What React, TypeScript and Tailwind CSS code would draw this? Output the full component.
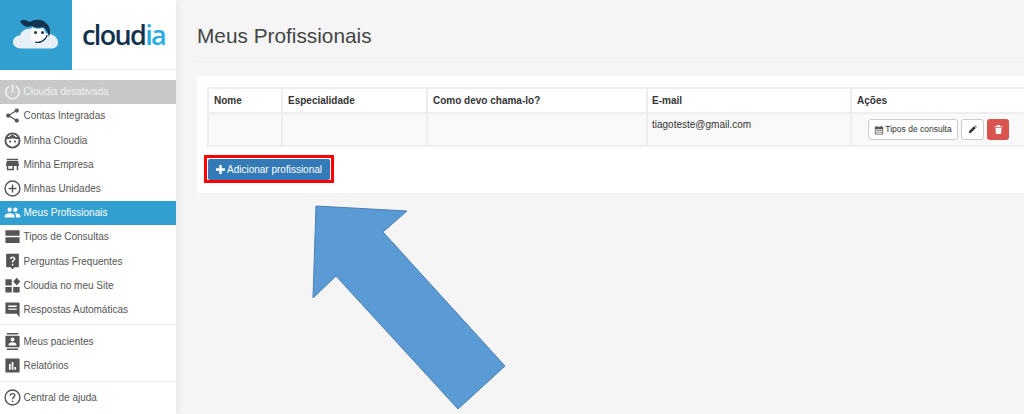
import type { ReactNode } from "react"

const font = "font-['Liberation_Sans',Arial,sans-serif]"

const g = (d: ReactNode) => (
  <svg viewBox="0 0 24 24" className="h-[17px] w-[17px] shrink-0" fill="currentColor">
    {d}
  </svg>
)

const items: { label: string; icon: ReactNode; state?: string; divider?: boolean }[] = [
  {
    label: "Cloudia desativada",
    state: "off",
    icon: (
      <svg viewBox="0 0 24 24" className="h-[17px] w-[17px] shrink-0" fill="none" stroke="currentColor" strokeWidth="2.4" strokeLinecap="round">
        <path d="M12 2.500v10" />
        <path d="M6.500 5a9.500 9.500 0 1 0 11 0" />
      </svg>
    ),
  },
  {
    label: "Contas Integradas",
    icon: g(<path d="M18 16.100c-.8 0-1.400.3-2 .8l-7.100-4.200c.1-.2.1-.5.100-.7s0-.5-.1-.7L16 7.200c.5.500 1.200.8 2 .8 1.700 0 3-1.300 3-3s-1.300-3-3-3-3 1.300-3 3c0 .2 0 .5.100.7L8 9.800C7.500 9.300 6.800 9 6 9c-1.700 0-3 1.300-3 3s1.300 3 3 3c.8 0 1.500-.3 2-.8l7.100 4.200c-.1.2-.1.4-.1.600 0 1.600 1.300 2.900 3 2.900s3-1.300 3-2.900-1.300-2.900-3-2.900z" />),
  },
  {
    label: "Minha Cloudia",
    icon: (
      <svg viewBox="0 0 24 24" className="h-[17px] w-[17px] shrink-0" fill="none" stroke="currentColor" strokeWidth="2.600">
        <circle cx="12" cy="12" r="10" />
        <path d="M3 9c4 0 7-1 9-4 2 3 5 4 9 4" fill="currentColor" />
        <circle cx="8.500" cy="13.500" r="1.500" fill="currentColor" stroke="none" />
        <circle cx="15.500" cy="13.500" r="1.500" fill="currentColor" stroke="none" />
      </svg>
    ),
  },
  {
    label: "Minha Empresa",
    icon: g(<path d="M20 4H4v2h16V4zm1 10v-2l-1-5H4l-1 5v2h1v6h10v-6h4v6h2v-6h1zm-9 4H6v-4h6v4z" />),
  },
  {
    label: "Minhas Unidades",
    icon: (
      <svg viewBox="0 0 24 24" className="h-[17px] w-[17px] shrink-0" fill="none" stroke="currentColor" strokeWidth="2">
        <circle cx="12" cy="12" r="10.500" />
        <path d="M12 6.500v11M6.500 12h11" />
      </svg>
    ),
  },
  {
    label: "Meus Profissionais",
    state: "active",
    icon: g(<path d="M16 11c1.700 0 3-1.300 3-3s-1.300-3-3-3-3 1.300-3 3 1.300 3 3 3zm-8 0c1.700 0 3-1.300 3-3S9.700 5 8 5 5 6.300 5 8s1.300 3 3 3zm0 2c-2.300 0-7 1.200-7 3.500V19h14v-2.500C15 14.200 10.300 13 8 13zm8 0h-1c1.200.8 2 2 2 3.500V19h6v-2.500c0-2.300-4.700-3.500-7-3.500z" />),
  },
  {
    label: "Tipos de Consultas",
    icon: g(<path d="M2 3h20v8H2zM2 13h20v8H2z" />),
  },
  {
    label: "Perguntas Frequentes",
    icon: g(
      <path fillRule="evenodd" d="M4 1h16a1 1 0 0 1 1 1v17a1 1 0 0 1-1 1h-5l-3 3-3-3H4a1 1 0 0 1-1-1V2a1 1 0 0 1 1-1zm7 14v2.500h2.200V15H11zm1.100-10c-2.200 0-3.700 1.300-3.900 3.400h2.200c.1-.9.700-1.500 1.700-1.500s1.600.6 1.600 1.400c0 .7-.4 1.100-1.100 1.700-1 .8-1.600 1.500-1.600 3.400h2.200c0-1.200.3-1.600 1.100-2.300 1-.8 1.700-1.600 1.700-2.900C16 6.400 14.500 5 12.100 5z" />,
    ),
  },
  {
    label: "Cloudia no meu Site",
    icon: g(<path d="M2 3h9v9H2zM2 14h9v8H2zM13 14h9v8h-9zM18 1l5 5.500-5 5.500-5-5.500z" />),
  },
  {
    label: "Respostas Automáticas",
    icon: g(
      <path fillRule="evenodd" d="M3 2h18a1 1 0 0 1 1 1v20l-4-5H3a1 1 0 0 1-1-1V3a1 1 0 0 1 1-1zm3 4.500v2h12v-2H6zm0 4v2h12v-2H6z" />,
    ),
  },
  {
    label: "Meus pacientes",
    divider: true,
    icon: g(
      <path fillRule="evenodd" d="M4 0h16v2H4zM4 22h16v2H4zM3 4h18a1 1 0 0 1 1 1v14a1 1 0 0 1-1 1H3a1 1 0 0 1-1-1V5a1 1 0 0 1 1-1zm9 2.500a2.800 2.800 0 1 0 0 5.600 2.800 2.800 0 0 0 0-5.600zM6.500 17.500h11V16c0-1.800-3.700-2.800-5.500-2.800s-5.500 1-5.500 2.800v1.500z" />,
    ),
  },
  {
    label: "Relatórios",
    icon: g(
      <path fillRule="evenodd" d="M3 2h18a1 1 0 0 1 1 1v18a1 1 0 0 1-1 1H3a1 1 0 0 1-1-1V3a1 1 0 0 1 1-1zm4 8v8h2.500v-8H7zm3.800-3v11h2.500V7h-2.500zm3.800 7v4h2.500v-4h-2.500z" />,
    ),
  },
  {
    label: "Central de ajuda",
    divider: true,
    icon: (
      <svg viewBox="0 0 24 24" className="h-[17px] w-[17px] shrink-0" fill="none" stroke="currentColor" strokeWidth="2">
        <circle cx="12" cy="12" r="10.500" />
        <path d="M8.800 9.500c0-1.900 1.400-3 3.200-3s3.200 1.100 3.200 2.800c0 2.400-3.200 2.500-3.200 5" />
        <circle cx="12" cy="17.300" r="1.200" fill="currentColor" stroke="none" />
      </svg>
    ),
  },
]

function Logo() {
  return (
    <div className="flex h-[70px] items-center border-b border-[#f0f0f0] bg-white">
      <div className="flex h-[70px] w-[72px] shrink-0 items-center justify-center bg-[#31a0d0]">
        <svg viewBox="0 0 46 32" className="ml-[-1px] mt-[-2px] h-8 w-[46px]">
          <path d="M8 30.500c-5 0-8-3-8-6.500s3-6.500 7-6.500c1-4 5-7 10-7 4 0 7 2 9 5 1-.5 3-.5 4 0 6-1 15 2 15 9 0 4-3 6-7 6z" fill="#e6f0f6" />
          <path d="M7 3c3-2 7-1 10 1 5-3 12-3 16 1 4 3 5 9 3 14-1-4-2-8-6-10-4 1-8 1-11-1-4 2-10 0-12-5z" fill="#12324e" />
          <path d="M19 9c3 2 7 2 11 1 2 2 3 5 3 8 0 4-4 7-8 7s-7-3-7-7c0-3 0-6 1-9z" fill="#ffffff" />
          <circle cx="22.500" cy="14.500" r="1.500" fill="#12324e" />
          <circle cx="29.500" cy="14.500" r="1.500" fill="#12324e" />
          <path d="M22 24c3 1 7 0 10-3 1-1 2-2 2-4" fill="none" stroke="#12324e" strokeWidth="1.200" />
        </svg>
      </div>
      <div className="ml-[10px] font-['Open_Sans','Liberation_Sans',sans-serif] text-[27px] font-semibold leading-none tracking-[-1.650px] text-[#12324e]">
        cloud<span className="text-[#29abe2]">ia</span>
      </div>
    </div>
  )
}

function Sidebar() {
  return (
    <aside className="z-10 h-[414px] w-[176px] shrink-0 overflow-hidden bg-white shadow-[2px_0_8px_rgba(0,0,0,0.07)]">
      <Logo />
      <nav className="pt-[9.600px]">
        {items.map((item) => (
          <div key={item.label} className={item.divider ? "mt-[3px] border-t border-[#eeeeee] pt-[4px]" : ""}>
            <div
              className={`flex h-[24.200px] items-center gap-[3px] pl-[3.500px] text-[10px] ${
                item.state === "off"
                  ? "bg-[#c8c8c8] text-[#f0f0f0]"
                  : item.state === "active"
                    ? "bg-[#31a0d0] text-white"
                    : "text-[#555555]"
              }`}
            >
              {item.icon}
              <span className="whitespace-nowrap">{item.label}</span>
            </div>
          </div>
        ))}
      </nav>
    </aside>
  )
}

function Table() {
  return (
    <table className="w-[830px] table-fixed border-collapse text-[10px] text-[#333333]">
      <thead>
        <tr className="h-[25px] bg-white text-left font-bold">
          <th className="w-[74px] border-2 border-[#eeeeee] px-[5px] font-bold">Nome</th>
          <th className="w-[145px] border-2 border-[#eeeeee] px-[5px] font-bold">Especialidade</th>
          <th className="w-[220px] border-2 border-[#eeeeee] px-[5px] font-bold">Como devo chama-lo?</th>
          <th className="w-[204px] border-2 border-[#eeeeee] px-[4px] font-bold">E-mail</th>
          <th className="border-2 border-[#eeeeee] px-[5px] font-bold">Ações</th>
        </tr>
      </thead>
      <tbody>
        <tr className="h-[33px] bg-[#f9f9f9]">
          <td className="border-2 border-[#eeeeee]" />
          <td className="border-2 border-[#eeeeee]" />
          <td className="border-2 border-[#eeeeee]" />
          <td className="border-2 border-[#eeeeee] px-[4px] pb-[9px] align-top pt-[3px]">tiagoteste@gmail.com</td>
          <td className="border-2 border-[#eeeeee] pl-[16px]">
            <div className="flex items-center gap-[3px] text-[8.500px]">
              <span className="flex h-[21px] w-[90px] items-center justify-center gap-[1px] rounded-[3px] border border-[#cccccc] bg-white">
                <svg viewBox="0 0 12 12" className="h-[10px] w-[10px]" fill="#555555">
                  <path fillRule="evenodd" d="M1 2h2V1h1v1h4V1h1v1h2v9.500H1V2zm1 3v5.500h8V5H2zm1 1h1.500v1.200H3V6zm2.300 0h1.500v1.200H5.300V6zm2.300 0h1.500v1.200H7.600V6zM3 8h1.500v1.200H3V8zm2.300 0h1.500v1.200H5.300V8zm2.300 0h1.500v1.200H7.600V8z" />
                </svg>
                Tipos de consulta
              </span>
              <span className="flex h-[21px] w-[23px] items-center justify-center rounded-[3px] border border-[#cccccc] bg-white">
                <svg viewBox="0 0 12 12" className="h-[9px] w-[9px]" fill="#333333">
                  <path d="M1 11l.6-3L8 1.600 10.400 4 4 10.400 1 11zM8.800.8l.7-.6 2.300 2.300-.7.700z" />
                </svg>
              </span>
              <span className="flex h-[21px] w-[22px] items-center justify-center rounded-[3px] bg-[#d9534f]">
                <svg viewBox="0 0 12 12" className="h-[9px] w-[9px]" fill="#ffffff">
                  <path d="M4.500 0h3l.5 1.500H11V3H1V1.500h3L4.500 0zM2 4h8l-.6 8H2.600L2 4z" />
                </svg>
              </span>
            </div>
          </td>
        </tr>
      </tbody>
    </table>
  )
}

export default function App() {
  return (
    <div className={`relative flex h-[414px] w-[1024px] overflow-hidden bg-[#f5f5f5] ${font}`}>
      <Sidebar />
      <main className="min-w-0 flex-1 pl-[21px]">
        <div className="h-[62px] border-b border-[#eeeeee] pt-[23px]">
          <h1 className="text-[20.800px] leading-[26px] text-[#444444]">Meus Profissionais</h1>
        </div>
        <section className="mt-[14px] h-[117px] overflow-hidden rounded-l-[3px] bg-white pl-[10px] pt-[11px]">
          <Table />
          <div className="-ml-[3px] mt-[8px] flex h-[28px] w-[130px] items-center justify-center border-[3px] border-[#ff0000] bg-white">
            <span className="flex h-[21px] w-[122px] items-center justify-center gap-[2px] rounded-[2px] bg-[#337ab7] text-[10px] text-white">
              <svg viewBox="0 0 10 10" className="h-[9px] w-[9px]" fill="#ffffff">
                <path d="M3.700 0h2.600v3.700H10v2.600H6.300V10H3.700V6.300H0V3.700h3.700z" />
              </svg>
              Adicionar profissional
            </span>
          </div>
        </section>
      </main>
      {/* Seta desenhada por cima da tela */}
      <svg className="absolute left-0 top-0" width="1024" height="414" viewBox="0 0 1024 414">
        <path
          d="M316 206 407 211 383 232 505 366 458 409 336 276 313 298Z"
          fill="#5b9bd5"
          stroke="#4a7fb0"
          strokeWidth="1"
        />
      </svg>
    </div>
  )
}
